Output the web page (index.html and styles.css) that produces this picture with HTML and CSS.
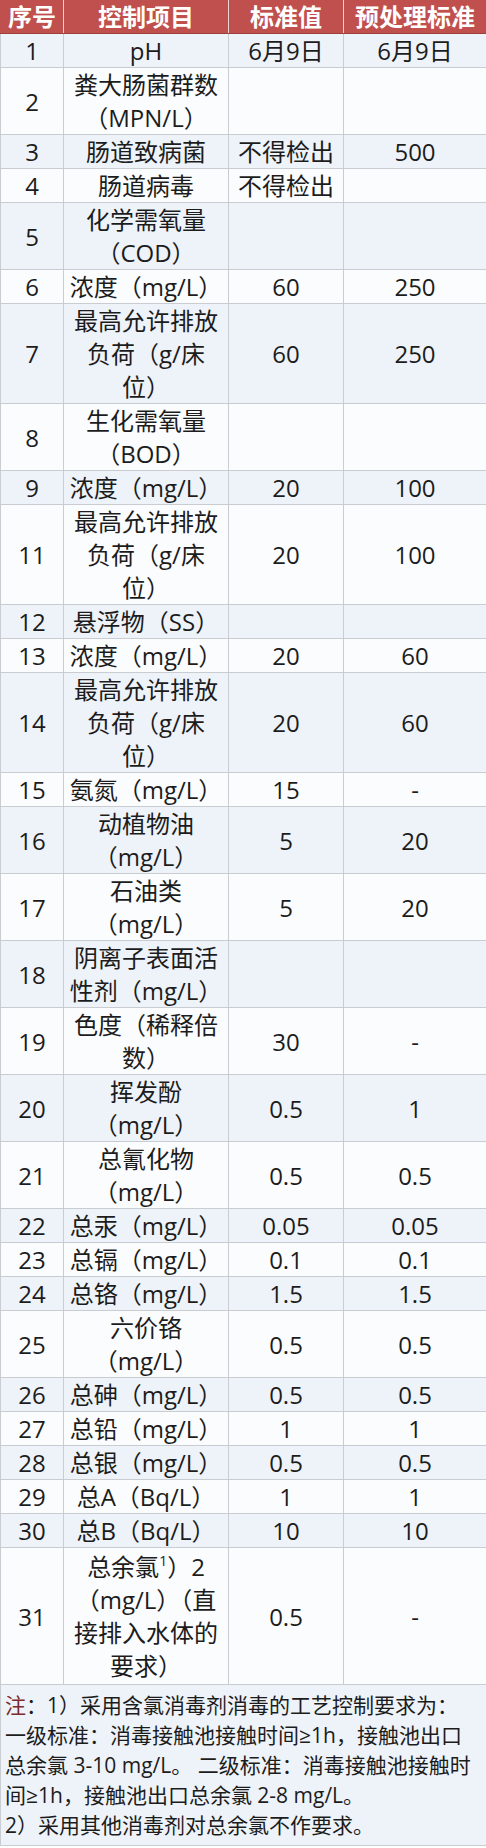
FILE: index.html
```html
<!DOCTYPE html>
<html lang="zh-CN">
<head>
<meta charset="utf-8">
<title>医疗机构水污染物排放标准</title>
<link rel="stylesheet" href="styles.css">
</head>
<body>
<table class="std">
  <colgroup>
    <col class="c-no">
    <col class="c-item">
    <col class="c-std">
    <col class="c-pre">
  </colgroup>
  <thead>
    <tr class="head">
      <th>序号</th><th>控制项目</th><th>标准值</th><th>预处理标准</th>
    </tr>
  </thead>
  <tbody>
    <tr><td>1</td><td>pH</td><td>6月9日</td><td>6月9日</td></tr>
    <tr><td>2</td><td>粪大肠菌群数<br>（MPN/L）</td><td></td><td></td></tr>
    <tr><td>3</td><td>肠道致病菌</td><td>不得检出</td><td>500</td></tr>
    <tr><td>4</td><td>肠道病毒</td><td>不得检出</td><td></td></tr>
    <tr><td>5</td><td>化学需氧量<br>（COD）</td><td></td><td></td></tr>
    <tr><td>6</td><td>浓度（mg/L）</td><td>60</td><td>250</td></tr>
    <tr><td>7</td><td>最高允许排放<br>负荷（g/床<br>位）</td><td>60</td><td>250</td></tr>
    <tr><td>8</td><td>生化需氧量<br>（BOD）</td><td></td><td></td></tr>
    <tr><td>9</td><td>浓度（mg/L）</td><td>20</td><td>100</td></tr>
    <tr><td>11</td><td>最高允许排放<br>负荷（g/床<br>位）</td><td>20</td><td>100</td></tr>
    <tr><td>12</td><td>悬浮物（SS）</td><td></td><td></td></tr>
    <tr><td>13</td><td>浓度（mg/L）</td><td>20</td><td>60</td></tr>
    <tr><td>14</td><td>最高允许排放<br>负荷（g/床<br>位）</td><td>20</td><td>60</td></tr>
    <tr><td>15</td><td>氨氮（mg/L）</td><td>15</td><td>-</td></tr>
    <tr><td>16</td><td>动植物油<br>（mg/L）</td><td>5</td><td>20</td></tr>
    <tr><td>17</td><td>石油类<br>（mg/L）</td><td>5</td><td>20</td></tr>
    <tr><td>18</td><td>阴离子表面活<br>性剂（mg/L）</td><td></td><td></td></tr>
    <tr><td>19</td><td>色度（稀释倍<br>数）</td><td>30</td><td>-</td></tr>
    <tr><td>20</td><td>挥发酚<br>（mg/L）</td><td>0.5</td><td>1</td></tr>
    <tr><td>21</td><td>总氰化物<br>（mg/L）</td><td>0.5</td><td>0.5</td></tr>
    <tr><td>22</td><td>总汞（mg/L）</td><td>0.05</td><td>0.05</td></tr>
    <tr><td>23</td><td>总镉（mg/L）</td><td>0.1</td><td>0.1</td></tr>
    <tr><td>24</td><td>总铬（mg/L）</td><td>1.5</td><td>1.5</td></tr>
    <tr><td>25</td><td>六价铬<br>（mg/L）</td><td>0.5</td><td>0.5</td></tr>
    <tr><td>26</td><td>总砷（mg/L）</td><td>0.5</td><td>0.5</td></tr>
    <tr><td>27</td><td>总铅（mg/L）</td><td>1</td><td>1</td></tr>
    <tr><td>28</td><td>总银（mg/L）</td><td>0.5</td><td>0.5</td></tr>
    <tr><td>29</td><td>总A（Bq/L）</td><td>1</td><td>1</td></tr>
    <tr><td>30</td><td>总B（Bq/L）</td><td>10</td><td>10</td></tr>
    <tr class="tall"><td>31</td><td class="chlorine"><span class="first">总余氯<sup>1</sup>）2</span><br>（mg/L）（直<br>接排入水体的<br>要求）</td><td>0.5</td><td>-</td></tr>
    <tr class="note">
      <td colspan="4"><span class="mark">注</span>：1）采用含氯消毒剂消毒的工艺控制要求为：<br>一级标准：消毒接触池接触时间≥1h，接触池出口<br>总余氯 3-10 mg/L。 二级标准：消毒接触池接触时<br>间≥1h，接触池出口总余氯 2-8 mg/L。<br>2）采用其他消毒剂对总余氯不作要求。</td>
    </tr>
  </tbody>
</table>
</body>
</html>
```

FILE: styles.css
```css
html, body {
  margin: 0;
  padding: 0;
  background: #ffffff;
}

.std {
  width: 486px;
  table-layout: fixed;
  border-collapse: collapse;
  font-family: "Open Sans", "Noto Sans CJK SC", sans-serif;
  font-size: 24px;
  color: #1c1c1c;
}

.c-no { width: 63px; }
.c-item { width: 165px; }
.c-std { width: 115px; }
.c-pre { width: 143px; }

.std th,
.std td {
  padding: 0;
  text-align: center;
  vertical-align: middle;
  white-space: nowrap;
  line-height: 33px;
  border: 1px solid #c9cdd2;
}

.head th {
  background: #c0504d;
  color: #ffffff;
  font-weight: bold;
  line-height: 32px;
  border-top-color: #c0504d;
  border-left-color: #ead3d2;
  border-right-color: #ead3d2;
  border-bottom: 1px solid #9e3f3c;
}

.head th:first-child { border-left-color: #c0504d; }
.head th:last-child { border-right-color: #c0504d; }

tbody tr:nth-child(odd) td { background: #eef3f9; }
tbody tr:nth-child(even) td { background: #fbfcfe; }

.tall td { height: 136px; }

.chlorine sup {
  font-size: 14px;
  line-height: 0;
  vertical-align: 10px;
}

.note td {
  text-align: left;
  font-size: 21px;
  line-height: 30px;
  padding: 5px 4px 5px 4px;
}

.mark { color: #7d2b2b; }
```
